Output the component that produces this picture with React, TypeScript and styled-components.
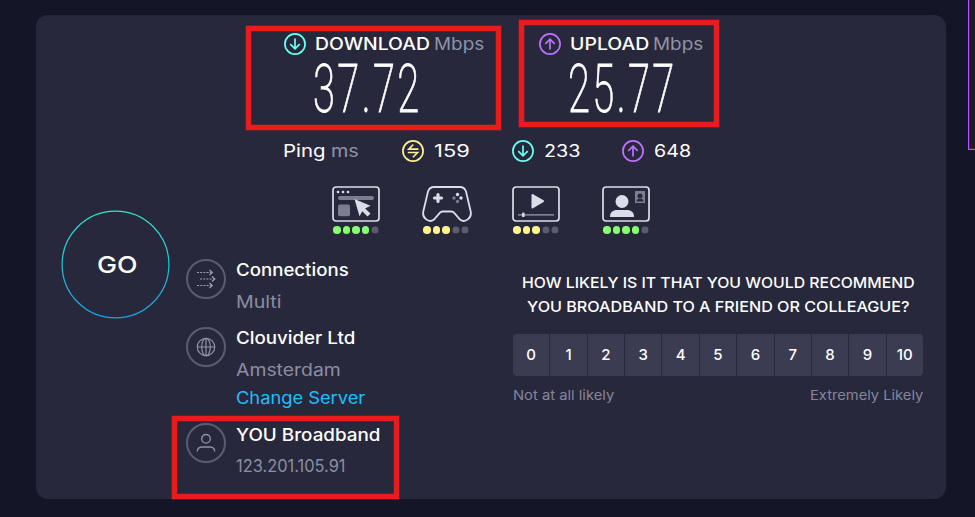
import React, { useLayoutEffect, useRef, useState } from "react";
import styled, { createGlobalStyle } from "styled-components";

const Global = createGlobalStyle`
  * { box-sizing: border-box; }
  body { margin: 0; overflow: hidden; background: #141526; font-family: Inter, "Liberation Sans", sans-serif; }
`;

const TEAL = "#6afff3";
const PURPLE = "#bf71ff";
const YELLOW = "#fff38e";
const GREEN = "#88ff70";

/* Text stretched to a set measure */
const Measure = styled.span<{ $w: number }>`
  display: block;
  flex: none;
  width: ${(p) => p.$w}px;
  white-space: nowrap;
`;
const Stretch = styled.span`
  display: inline-block;
  transform-origin: 0 50%;
`;
function Fit({ w, children }: { w: number; children: React.ReactNode }) {
  const ref = useRef<HTMLSpanElement>(null);
  const [scale, setScale] = useState(1);
  useLayoutEffect(() => {
    if (ref.current) setScale(w / ref.current.offsetWidth);
  }, [w]);
  return (
    <Measure $w={w}>
      <Stretch ref={ref} style={{ transform: `scaleX(${scale})` }}>{children}</Stretch>
    </Measure>
  );
}

const Page = styled.main`
  position: relative;
  width: 975px;
  height: 517px;
  padding: 15px 29px 18px 36px;
  overflow: hidden;
  background: #141526;
`;
const Panel = styled.section`
  height: 484px;
  border-radius: 12px;
  background: #27283c;
  display: grid;
  grid-template-columns: 150px 307px 1fr;
  grid-template-rows: 229px 1fr;
`;
const Results = styled.div`
  grid-column: 1 / -1;
  padding: 17px 0 0 247px;
`;
const Metrics = styled.div`
  display: grid;
  grid-template-columns: 255px 200px;
  height: 107px;
  padding-left: 1px;
`;
const MetricHead = styled.div`
  display: flex;
  align-items: center;
  height: 24px;
  font-size: 17px;
  line-height: 24px;
  color: #fff;
  font-weight: 500;
`;
const Muted = styled.span`
  color: #9193a8;
  font-weight: 400;
`;
const IconSlot = styled.span<{ $gap: number }>`
  display: flex;
  margin-right: ${(p) => p.$gap}px;
`;
const Gap = styled.span<{ $w: number }>`
  width: ${(p) => p.$w}px;
  flex: none;
`;
const Value = styled.div`
  padding-left: 29px;
  font-family: Roboto, Inter, sans-serif;
  font-size: 67px;
  line-height: 66px;
  letter-spacing: 4px;
  font-weight: 200;
  color: #fff;
  -webkit-text-stroke: 0.8px #fff;
`;
const PingRow = styled.div`
  display: flex;
  align-items: center;
  height: 24px;
  font-size: 17px;
  line-height: 24px;
  color: #fff;
`;
const PingLabel = styled.div`
  display: flex;
  width: 119px;
`;
const PingItem = styled.div`
  display: flex;
  align-items: center;
  width: 110px;
`;
const Qualities = styled.div`
  display: flex;
  padding: 23px 0 0 49px;
`;
const Quality = styled.div`
  width: 90px;
  height: 52px;
  svg { display: block; }
`;
const Dots = styled.div`
  display: flex;
  gap: 2px;
  padding: 4px 0 0 1px;
`;
const Dot = styled.i<{ $c: string; $on: boolean }>`
  width: 7.5px;
  height: 7.5px;
  border-radius: 50%;
  background: ${(p) => (p.$on ? p.$c : "#5b5c71")};
  transform: scale(${(p) => (p.$on ? 1 : 0.85)});
`;

const GoCell = styled.div`
  padding: 17px 0 0 25px;
`;
const GoButton = styled.button`
  position: relative;
  display: flex;
  align-items: center;
  justify-content: center;
  width: 109px;
  height: 109px;
  padding: 0 1px 0 0;
  border: 0;
  border-radius: 50%;
  background: transparent;
  color: #fff;
  font: 500 23.5px/30px Inter, sans-serif;
  margin-top: -51px;
`;
const Ring = styled.svg`
  position: absolute;
  inset: 0;
`;

const InfoList = styled.div`
  padding: 15px 0 0;
`;
const InfoRow = styled.div<{ $h: number }>`
  display: flex;
  gap: 10px;
  height: ${(p) => p.$h}px;
`;
const InfoIcon = styled.span`
  width: 40px;
  height: 40px;
  border: 2px solid #5b5c71;
  border-radius: 50%;
  display: flex;
  align-items: center;
  justify-content: center;
`;
const InfoText = styled.div<{ $gap: number; $top: number }>`
  font-size: 17px;
  color: #8c8ea3;
  display: grid;
  grid-template-rows: 24px 24px 24px;
  line-height: 24px;
  row-gap: ${(p) => p.$gap}px;
  align-content: start;
  margin-top: ${(p) => p.$top}px;
`;
const Name = styled.div`
  color: #fff;
  font-weight: 550;
`;
const LinkText = styled.a`
  color: #1cbfff;
  margin-top: -4px;
`;

const Survey = styled.div`
  padding: 27px 0 0 20px;
`;
const Question = styled.div`
  display: flex;
  flex-direction: column;
  align-items: center;
  width: 411px;
  color: #fff;
  font-size: 15px;
  line-height: 24px;
  font-weight: 500;
`;
const Scale = styled.div`
  display: grid;
  grid-template-columns: repeat(11, 1fr);
  gap: 1px;
  width: 410px;
  height: 42px;
  margin-top: 15px;
  border-radius: 4px;
  overflow: hidden;
`;
const Score = styled.button`
  border: 0;
  padding: 0;
  background: #3b3c51;
  color: #fff;
  font: 500 15px/42px Inter, sans-serif;
`;
const Ends = styled.div`
  display: flex;
  justify-content: space-between;
  width: 410px;
  margin-top: 9px;
  color: #85869b;
  font-size: 13px;
  line-height: 20px;
`;

const Highlight = styled.div<{ $x: number; $y: number; $w: number; $h: number }>`
  position: absolute;
  left: ${(p) => p.$x}px;
  top: ${(p) => p.$y}px;
  width: ${(p) => p.$w}px;
  height: ${(p) => p.$h}px;
  border: 5px solid #e81b1d;
  box-shadow: 0 0 0 0.5px #8e2028, inset 0 0 0 0.5px #8e2028;
  pointer-events: none;
`;
const SideBox = styled.div`
  position: absolute;
  left: 968px;
  top: -4px;
  width: 20px;
  height: 154px;
  border: 1px solid #b557f5;
  box-shadow: inset 0 0 0 1px #38274f;
  background: #1b1b2a;
`;

function Circle({ kind }: { kind: "down" | "up" | "idle" }) {
  const c = kind === "down" ? TEAL : kind === "up" ? PURPLE : YELLOW;
  return (
    <svg width="22" height="22" viewBox="0 0 22 22" fill="none" stroke={c} strokeWidth="1.7">
      <circle cx="11" cy="11" r="10.1" />
      {kind === "down" && <path d="M11 5.6v10M6.3 11.2l4.7 4.7 4.7-4.7" />}
      {kind === "up" && <path d="M11 16.4v-10M6.3 10.8L11 6.1l4.7 4.7" />}
      {kind === "idle" && <path strokeWidth="1.6" d="M11.3 4.5L6.8 9.1h9.6M5.800 12.5h9.8L10.900 17.3" />}
    </svg>
  );
}

const INK = "#dcdde8";
const DIM = "#7c7d90";
function Browser() {
  return (
    <svg width="48" height="36" viewBox="0 0 48 36" fill="none">
      <rect x="1" y="1" width="46" height="34" rx="3" stroke={INK} strokeWidth="1.7" />
      <g fill={INK}><circle cx="6" cy="6" r="1.3" /><circle cx="11" cy="6" r="1.3" /><circle cx="16" cy="6" r="1.3" /></g>
      <rect x="6" y="10" width="36" height="4" rx="2" fill={DIM} />
      <rect x="6" y="18.5" width="12" height="11.7" rx="2" fill={DIM} />
      <path d="M22.5 13l16 6.7-5.4 2.7 5.4 5.2-3 2.8-5.2-5.2-2.8 5z" fill={INK} />
    </svg>
  );
}
function Gamepad() {
  return (
    <svg width="50" height="36" viewBox="0 0 50 36" fill="none">
      <path d="M12 1h26c3 0 5 1.5 6 4.5L48.6 25c1.7 7-5.6 12.5-10.6 8.500L32 26.700q-1-1.200-2.500-1.200h-9q-1.500 0-2.500 1.200l-6 6.800C7 37.500-.3 32 1.400 25L6 5.500C7 2.500 9 1 12 1z" stroke={INK} strokeWidth="1.8" />
      <path d="M16 8.500v7M12.500 12h7" stroke={INK} strokeWidth="3.200" strokeLinecap="round" />
      <circle cx="35.500" cy="8.500" r="1.7" fill={INK} /><circle cx="39" cy="12" r="1.7" fill={INK} />
      <circle cx="32" cy="12" r="1.7" fill={DIM} /><circle cx="35.500" cy="15.500" r="1.7" fill={DIM} />
    </svg>
  );
}
function Video() {
  return (
    <svg width="48" height="36" viewBox="0 0 48 36" fill="none">
      <rect x="1" y="1" width="46" height="34" rx="3" stroke={INK} strokeWidth="1.7" />
      <path d="M20.500 9l10.500 6.200-10.500 6.300z" fill={INK} stroke={INK} strokeWidth="2" strokeLinejoin="round" />
      <path d="M6 28.800h36" stroke={DIM} strokeWidth="1.800" />
      <rect x="10" y="26.500" width="2.600" height="4.600" rx="1.200" fill={INK} />
    </svg>
  );
}
function Call() {
  return (
    <svg width="48" height="36" viewBox="0 0 48 36" fill="none">
      <rect x="1" y="1" width="46" height="34" rx="3" stroke={INK} strokeWidth="1.7" />
      <circle cx="20" cy="15.500" r="6.500" fill={INK} />
      <path d="M8 31c0-5 3-7 7-7h10c4 0 7 2 7 7z" fill={INK} />
      <path d="M33 5h10v12H33z" fill={DIM} />
      <circle cx="38" cy="10" r="2.500" fill="#27283c" />
      <path d="M34.500 15.500c0-2 1.500-2.700 3.500-2.700s3.500.7 3.500 2.700z" fill="#27283c" />
    </svg>
  );
}

const qualities = [
  { icon: <Browser />, on: 4, color: GREEN },
  { icon: <Gamepad />, on: 3, color: YELLOW },
  { icon: <Video />, on: 3, color: YELLOW },
  { icon: <Call />, on: 4, color: GREEN },
];

function Connections() {
  return (
    <svg width="20" height="20" viewBox="0 0 20 20" fill="none" stroke="#a0a1b4" strokeWidth="1.200">
      <path strokeDasharray="2 1.200" d="M1 3.500h14M4 10h14M1 16.500h14" />
      <path d="M13.500 1l2.800 2.500-2.800 2.500M16 7.500l2.800 2.500-2.800 2.500M13.500 14l2.800 2.500-2.800 2.500" />
    </svg>
  );
}
function Globe() {
  return (
    <svg width="20" height="20" viewBox="0 0 20 20" fill="none" stroke="#9193a8" strokeWidth="1.200">
      <circle cx="10" cy="10" r="8.700" /><ellipse cx="10" cy="10" rx="4.300" ry="8.700" />
      <path d="M10 1.300v17.400M1.300 10h17.400" />
    </svg>
  );
}
function Person() {
  return (
    <svg width="20" height="20" viewBox="0 0 20 20" fill="none" stroke="#9193a8" strokeWidth="1.300">
      <circle cx="10" cy="5.800" r="4.300" />
      <path d="M1.300 18.500c0-3 1.800-4.300 4.500-4.500h8.400c2.700.2 4.500 1.500 4.500 4.500" />
    </svg>
  );
}

export default function App() {
  return (
    <Page>
      <Global />
      <Panel>
        <Results>
          <Metrics>
            <div>
              <MetricHead>
                <IconSlot $gap={9}><Circle kind="down" /></IconSlot>
                <Fit w={115}>DOWNLOAD</Fit><Gap $w={4} /><Muted><Fit w={50}>Mbps</Fit></Muted>
              </MetricHead>
              <Value><Fit w={109}>37.72</Fit></Value>
            </div>
            <div>
              <MetricHead>
                <IconSlot $gap={9}><Circle kind="up" /></IconSlot>
                <Fit w={79}>UPLOAD</Fit><Gap $w={4} /><Muted><Fit w={50}>Mbps</Fit></Muted>
              </MetricHead>
              <Value><Fit w={109}>25.77</Fit></Value>
            </div>
          </Metrics>
          <PingRow>
            <PingLabel><Fit w={42}>Ping</Fit><Gap $w={6} /><Muted><Fit w={28}>ms</Fit></Muted></PingLabel>
            <PingItem><IconSlot $gap={10}><Circle kind="idle" /></IconSlot><Fit w={36}>159</Fit></PingItem>
            <PingItem><IconSlot $gap={10}><Circle kind="down" /></IconSlot><Fit w={36}>233</Fit></PingItem>
            <PingItem><IconSlot $gap={10}><Circle kind="up" /></IconSlot><Fit w={37}>648</Fit></PingItem>
          </PingRow>
          <Qualities>
            {qualities.map((q, i) => (
              <Quality key={i}>
                {q.icon}
                <Dots>{[0, 1, 2, 3, 4].map((n) => <Dot key={n} $c={q.color} $on={n < q.on} />)}</Dots>
              </Quality>
            ))}
          </Qualities>
        </Results>
        <GoCell>
          <GoButton>
            <Ring width="109" height="109" viewBox="0 0 109 109">
              <defs>
                <linearGradient id="ring" x1="0" y1="0" x2="0" y2="1">
                  <stop offset="0" stopColor="#2ee6c8" /><stop offset="1" stopColor="#1c9fe8" />
                </linearGradient>
              </defs>
              <circle cx="54.500" cy="54.500" r="53.400" fill="none" stroke="url(#ring)" strokeWidth="1.200" />
            </Ring>
            <Fit w={41}>GO</Fit>
          </GoButton>
        </GoCell>
        <InfoList>
          <InfoRow $h={68}>
            <InfoIcon><Connections /></InfoIcon>
            <InfoText $gap={8} $top={-1}><Name><Fit w={113}>Connections</Fit></Name><Fit w={45}>Multi</Fit></InfoText>
          </InfoRow>
          <InfoRow $h={96}>
            <InfoIcon><Globe /></InfoIcon>
            <InfoText $gap={8} $top={-1}>
              <Name><Fit w={119}>Clouvider Ltd</Fit></Name><Fit w={105}>Amsterdam</Fit>
              <LinkText><Fit w={129}>Change Server</Fit></LinkText>
            </InfoText>
          </InfoRow>
          <InfoRow $h={60}>
            <InfoIcon><Person /></InfoIcon>
            <InfoText $gap={7} $top={0}><Name><Fit w={144}>YOU Broadband</Fit></Name><Fit w={110}>123.201.105.91</Fit></InfoText>
          </InfoRow>
        </InfoList>
        <Survey>
          <Question>
            <Fit w={393}>HOW LIKELY IS IT THAT YOU WOULD RECOMMEND</Fit>
            <Fit w={383}>YOU BROADBAND TO A FRIEND OR COLLEAGUE?</Fit>
          </Question>
          <Scale>{Array.from({ length: 11 }, (_, n) => <Score key={n}>{n}</Score>)}</Scale>
          <Ends><Fit w={101}>Not at all likely</Fit><Fit w={113}>Extremely Likely</Fit></Ends>
        </Survey>
      </Panel>
      <SideBox />
      <Highlight $x={246} $y={26} $w={255} $h={104} />
      <Highlight $x={519} $y={20} $w={200} $h={107} />
      <Highlight $x={172} $y={416} $w={227} $h={83} />
    </Page>
  );
}
